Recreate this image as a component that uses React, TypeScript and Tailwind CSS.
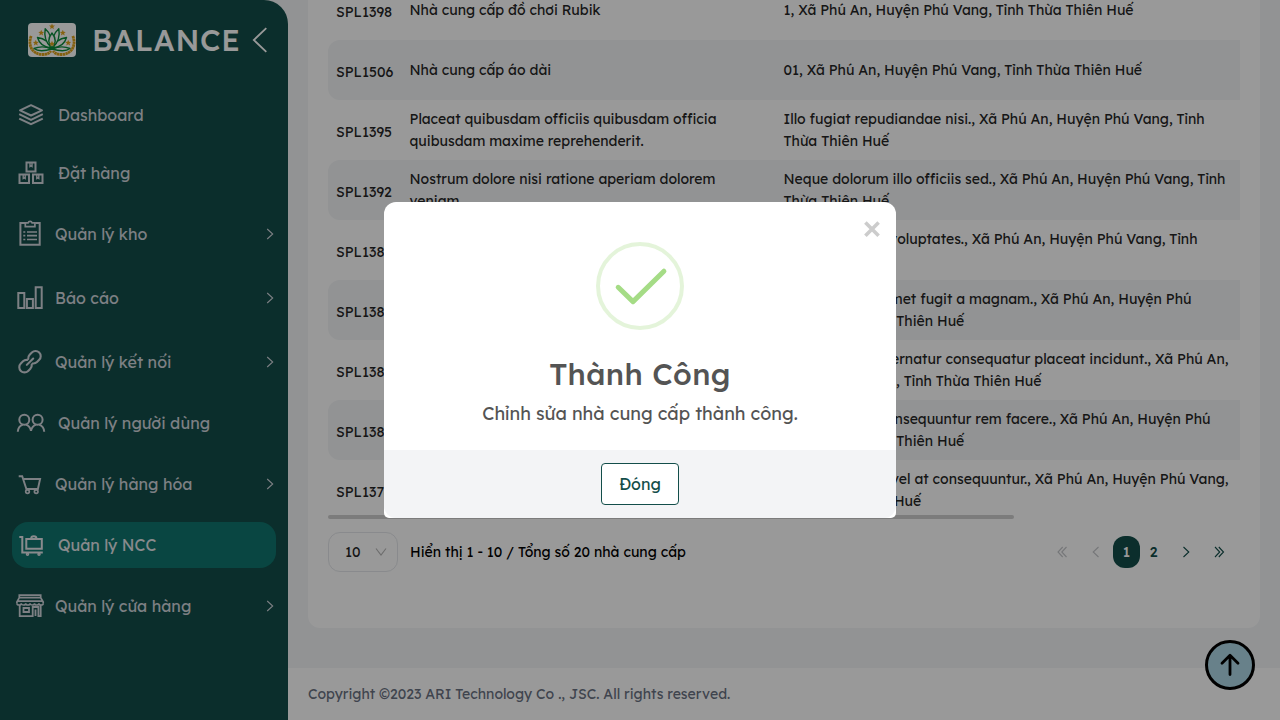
import type { ReactNode } from "react";

type MenuEntry = { label: string; icon: ReactNode; sub?: boolean; active?: boolean };

function MenuIcon({ box, children }: { box: string; children: ReactNode }) {
  return (
    <svg viewBox={box} className="h-[30px] w-[30px] shrink-0" fill="none" stroke="currentColor" strokeWidth="2">
      {children}
    </svg>
  );
}

const menu: MenuEntry[] = [
  {
    label: "Dashboard",
    icon: (
      <MenuIcon box="16 100 30 30">
        <path d="M31 105.2 42 110.3 31 115.500 20 110.300z" strokeLinejoin="round" />
        <path d="M19.2 114.2 31 119.8 42.8 114.2M19.2 118.6 31 124.2 42.8 118.6" />
      </MenuIcon>
    ),
  },
  {
    label: "Đặt hàng",
    icon: (
      <MenuIcon box="16 158 30 30">
        <path d="M26.500 162.500h9v9h-9zM19.500 174.500h9.500v8.500h-9.500zM33 174.500h9.500v8.500H33z" />
        <path d="M30 163v3.500l1-.6 1 .6V163M23.200 175v3.500l1-.6 1 .6V175M36.800 175v3.500l1-.6 1 .6V175" strokeWidth="1.400" />
      </MenuIcon>
    ),
  },
  {
    label: "Quản lý kho",
    sub: true,
    icon: (
      <MenuIcon box="16 219 30 30">
        <path d="M25 223H20.400V244.800H39.700V223H35.200" />
        <path d="M25.300 222.900h2.800c.3-1.200 1-1.600 2-1.600s1.700.4 2 1.600h2.800v3.800h-9.600z" strokeWidth="1.700" />
        <path d="M27 232h10M27 235.700h10M27 239.500h10M23.300 232h2M23.300 235.700h2M23.300 239.500h2" strokeWidth="1.700" />
      </MenuIcon>
    ),
  },
  {
    label: "Báo cáo",
    sub: true,
    icon: (
      <MenuIcon box="16 283 30 30">
        <path d="M18.300 293h6v15h-6zM26.900 299h6v9h-6zM35.700 287.300h6v20.700h-6z" />
      </MenuIcon>
    ),
  },
  {
    label: "Quản lý kết nối",
    sub: true,
    icon: (
      <MenuIcon box="16 347 30 30">
        <g transform="rotate(-45 30 361.700)" strokeWidth="2.100" strokeLinecap="round">
          <path d="M29.300 358.500a5.200 5.200 0 0 0-4-2h-3.100a5.200 5.200 0 0 0 0 10.400h3.100a5.200 5.200 0 0 0 4-2" />
          <path d="M30.700 358.500a5.200 5.200 0 0 1 4-2h3.100a5.200 5.200 0 0 1 0 10.400h-3.100a5.200 5.200 0 0 1-4-2" />
          <path d="M25.500 361.700h9" />
        </g>
      </MenuIcon>
    ),
  },
  {
    label: "Quản lý người dùng",
    icon: (
      <MenuIcon box="16 408 30 30">
        <circle cx="24.300" cy="419.800" r="5" />
        <circle cx="37.600" cy="419.800" r="5" />
        <path d="M17.800 431.800c.2-3.700 2.200-6.200 5-7.200M25.800 424.600c2.700.8 4.600 3 5.200 6.200.6-3.200 2.500-5.400 5.200-6.200M39.200 424.600c2.800 1 4.800 3.500 5 7.200" />
      </MenuIcon>
    ),
  },
  {
    label: "Quản lý hàng hóa",
    sub: true,
    icon: (
      <MenuIcon box="16 469 30 30">
        <path d="M18.700 476.200h3.500l4.200 12.800h11.500L40.100 479H24" strokeWidth="1.900" />
        <circle cx="27.500" cy="491.600" r="1.800" strokeWidth="1.700" />
        <circle cx="36.200" cy="491.600" r="1.800" strokeWidth="1.700" />
      </MenuIcon>
    ),
  },
  {
    label: "Quản lý NCC",
    active: true,
    icon: (
      <MenuIcon box="16 530 30 30">
        <path d="M19.300 537h3v15.500H42.800" />
        <path d="M26.300 539h15.500v9.800H26.300z" />
        <path d="M31.200 538.500c0-1.600 1-2.300 2.600-2.300s2.600.7 2.600 2.300" />
        <circle cx="27.500" cy="554.300" r="1" strokeWidth="1.500" />
        <circle cx="39" cy="554.300" r="1" strokeWidth="1.500" />
      </MenuIcon>
    ),
  },
  {
    label: "Quản lý cửa hàng",
    sub: true,
    icon: (
      <MenuIcon box="16 591 30 30">
        <path d="M19.300 595.200h21.400v2.500H19.300zM19.300 597.700 16.900 602v1.200M40.700 597.700l2.500 4.300v1.200M18 601.200h24.200" strokeWidth="1.700" />
        <path d="M16.900 603.200a2.200 1.900 0 0 0 4.400 0 2.200 1.900 0 0 0 4.400 0 2.200 1.900 0 0 0 4.400 0 2.200 1.900 0 0 0 4.400 0 2.200 1.900 0 0 0 4.400 0 2.200 1.900 0 0 0 4.400 0" strokeWidth="1.500" />
        <path d="M19.700 605v11.200h13V607h5.700v9.200h2.300V605M35.500 616v-6.500M23.500 608h5.500v4h-5.500z" strokeWidth="1.800" />
      </MenuIcon>
    ),
  },
];

type Line = { text: string; className?: string };
type Supplier = { code: string; name: Line[]; address: Line[] };

const suppliers: Supplier[] = [
  {
    code: "SPL1398",
    name: [{ text: "Nhà cung cấp đồ chơi Rubik" }],
    address: [{ text: "1, Xã Phú An, Huyện Phú Vang, Tỉnh Thừa Thiên Huế" }],
  },
  {
    code: "SPL1506",
    name: [{ text: "Nhà cung cấp áo dài" }],
    address: [{ text: "01, Xã Phú An, Huyện Phú Vang, Tỉnh Thừa Thiên Huế" }],
  },
  {
    code: "SPL1395",
    name: [{ text: "Placeat quibusdam officiis quibusdam officia" }, { text: "quibusdam maxime reprehenderit." }],
    address: [{ text: "Illo fugiat repudiandae nisi., Xã Phú An, Huyện Phú Vang, Tỉnh" }, { text: "Thừa Thiên Huế" }],
  },
  {
    code: "SPL1392",
    name: [{ text: "Nostrum dolore nisi ratione aperiam dolorem" }, { text: "veniam." }],
    address: [{ text: "Neque dolorum illo officiis sed., Xã Phú An, Huyện Phú Vang, Tỉnh" }, { text: "Thừa Thiên Huế" }],
  },
  {
    code: "SPL1389",
    name: [{ text: "Nisi dolorem ratione." }],
    address: [
      { text: "Maxime nisi voluptates., Xã Phú An, Huyện Phú Vang, Tỉnh", className: "w-[414px] justify-end" },
      { text: "Thừa Thiên" },
    ],
  },
  {
    code: "SPL1388",
    name: [{ text: "Officia quibusdam." }],
    address: [
      { text: "Aperiam sit amet fugit a magnam., Xã Phú An, Huyện Phú", className: "w-[408px] justify-end" },
      { text: "Vang, Tỉnh Thừa Thiên Huế" },
    ],
  },
  {
    code: "SPL1386",
    name: [{ text: "Maxime officiis." }],
    address: [
      { text: "Nisi aspernatur consequatur placeat incidunt., Xã Phú An,", className: "w-[445px] justify-end" },
      { text: "Huyện Phú Vang, Tỉnh Thừa Thiên Huế" },
    ],
  },
  {
    code: "SPL1384",
    name: [{ text: "Dolorem aperiam." }],
    address: [
      { text: "Sit illo nisi consequuntur rem facere., Xã Phú An, Huyện Phú", className: "w-[427px] justify-end" },
      { text: "Vang, Tỉnh Thừa Thiên Huế" },
    ],
  },
  {
    code: "SPL1376",
    name: [{ text: "Ratione placeat." }],
    address: [
      { text: "Nostrum illo vel at consequuntur., Xã Phú An, Huyện Phú Vang,", className: "w-[445px] justify-end" },
      { text: "Tỉnh Thừa Thiên Huế" },
    ],
  },
];

const stars = [
  [24, 3.4],
  [13.2, 9.8],
  [34.8, 9.8],
  [7.8, 19.8],
  [40.2, 19.8],
  [24, 20.8],
];

function Logo() {
  return (
    <svg viewBox="0 0 48 34" className="h-[34px] w-12 rounded bg-white">
      <g fill="none" stroke="#dda018" strokeWidth="2.800" strokeDasharray="2.400 .4">
        <path d="M3.200 13C-.5 22 4 31 14 31.500c4.500.2 7-1 9-3.500" />
        <path d="M44.800 13c3.700 9-.8 18-10.800 18.500-4.500.2-7-1-9-3.500" />
      </g>
      <g fill="#fff" stroke="#0d8a3c" strokeWidth="1.400" strokeLinejoin="round">
        <path d="M24 26C14 29 9 28 6 25.500c6-2.500 12-2 18 .5zM24 26c10 3 15 2 18-.5-6-2.500-12-2-18 .5z" />
        <path d="M23 25C15 24 11 20 9.500 14.500 16 15.500 21 18.500 23 25zM25 25c8-1 12-5 13.500-10.500C32 15.500 27 18.500 25 25z" />
        <path d="M23 24C17.500 19 16 12.500 17.200 5.800 22 10 24.500 16 23 24zM25 24c5.500-5 7-11.500 5.800-18.200C26 10 23.500 16 25 24z" />
        <path d="M24 25c-4-4.500-4-10 0-15 4 5 4 10.500 0 15z" />
      </g>
      {stars.map(([x, y]) => (
        <path
          key={`${x}-${y}`}
          transform={`translate(${x} ${y})`}
          fill="#dfa31b"
          d="M0-3 .8-1 3-.9 1.300.5 1.900 2.700 0 1.500-1.900 2.700-1.300.5-3-.9-.8-1z"
        />
      ))}
    </svg>
  );
}

function Sidebar() {
  return (
    <aside className="flex h-[720px] w-72 shrink-0 flex-col rounded-tr-3xl bg-[#134e4a]">
      <div className="flex h-20 items-center pl-7 text-white">
        <Logo />
        <span className="ml-4 w-[150px] text-[30px] leading-9 font-medium tracking-[0.7px]">BALANCE</span>
        <svg viewBox="0 0 16 26" className="ml-2.5 h-[26px] w-4" fill="none" stroke="currentColor" strokeWidth="1.800">
          <path d="M14.300 1.200 1.800 13l12.500 11.800" />
        </svg>
      </div>
      <ul className="mt-3 flex flex-col gap-3 px-3">
        {menu.map((item) => (
          <li
            key={item.label}
            className={`flex items-center rounded-2xl pl-1 text-base ${item.sub ? "h-[52px]" : "h-[46px]"} ${
              item.active ? "bg-[#0f766e] text-gray-200" : "text-gray-300"
            }`}
          >
            {item.icon}
            <span className={`whitespace-nowrap ${item.sub ? "ml-[9px]" : "ml-3"}`}>{item.label}</span>
            {item.sub && (
              <svg viewBox="0 0 8 12" className="mr-0.5 ml-auto h-3 w-2" fill="none" stroke="currentColor" strokeWidth="1.100">
                <path d="M1.200 1 6.700 6l-5.500 5" />
              </svg>
            )}
          </li>
        ))}
      </ul>
    </aside>
  );
}

function Cell({ lines, className }: { lines: Line[]; className: string }) {
  return (
    <div className={`flex flex-col whitespace-nowrap ${className}`}>
      {lines.map((line) => (
        <span key={line.text} className={`flex leading-[22px] ${line.className ?? ""}`}>
          {line.text}
        </span>
      ))}
    </div>
  );
}

function SupplierTable() {
  return (
    <div className="-mt-5 text-sm text-[#262626]">
      {suppliers.map((s, i) => (
        <div key={s.code} className={`flex h-[60px] items-center rounded-l-xl ${i % 2 ? "bg-[#f3f5f7]" : "bg-white"}`}>
          <span className="w-[81.5px] shrink-0 pt-1 pl-2">{s.code}</span>
          <Cell lines={s.name} className="w-[374px] shrink-0" />
          <Cell lines={s.address} className="w-[456px]" />
        </div>
      ))}
    </div>
  );
}

function PageArrow({ d, className }: { d: string; className: string }) {
  return (
    <svg viewBox="0 0 12 12" className={`h-3 w-3 ${className}`} fill="none" stroke="currentColor" strokeWidth="1.100">
      <path d={d} />
    </svg>
  );
}

function Pagination() {
  return (
    <div className="mt-3 flex h-10 items-center text-sm">
      <div className="flex h-10 w-[70px] items-center justify-between rounded-xl border border-gray-200 pr-2.5 pl-4 text-[#262626]">
        <span>10</span>
        <svg viewBox="0 0 12 12" className="h-3 w-3 text-[#b5b5b5]" fill="none" stroke="currentColor" strokeWidth="1.100">
          <path d="M1 2.500 6 9l5-6.500" />
        </svg>
      </div>
      <span className="ml-3 whitespace-nowrap text-black">Hiển thị 1 - 10 / Tổng số 20 nhà cung cấp</span>
      <div className="mr-[15px] ml-auto flex items-center text-[#134e4a]">
        <PageArrow className="text-[#c4c6ca]" d="M5.700 1 1 6l4.700 5M9.500 1 4.800 6 9.500 11" />
        <PageArrow className="ml-[21px] text-[#c4c6ca]" d="M8.500 1 3.200 6l5.300 5" />
        <span className="ml-[11px] flex h-8 w-[27px] items-center justify-center rounded-xl bg-[#134e4a] font-medium text-white">1</span>
        <span className="w-[27px] text-center font-medium">2</span>
        <PageArrow className="ml-[13px]" d="M3.500 1 8.800 6l-5.300 5" />
        <PageArrow className="ml-[21px]" d="M2 1l4.700 5L2 11M5.800 1l4.700 5-4.700 5" />
      </div>
    </div>
  );
}

function SuccessDialog() {
  return (
    <div className="relative flex h-[316px] w-[512px] flex-col items-center overflow-hidden rounded-t-xl rounded-b-[5px] bg-white text-[#545454]">
      <button className="absolute top-[17px] right-[14px] flex h-5 w-5 items-center justify-center">
        <svg viewBox="0 0 20 20" className="h-5 w-5" stroke="#ccc" strokeWidth="3.600">
          <path d="M3.400 3.600 16.600 16.800M16.600 3.600 3.400 16.800" />
        </svg>
      </button>
      <svg viewBox="0 0 88 88" className="mt-10 h-[88px] w-[88px] shrink-0" fill="none">
        <circle cx="44" cy="44" r="42" stroke="#a5dc86" strokeOpacity=".3" strokeWidth="4" />
        <path d="M22.200 45.300 37 59.600 67.900 29.200" stroke="#a5dc86" strokeWidth="5" strokeLinecap="round" strokeLinejoin="round" />
      </svg>
      <h2 className="mt-[26px] text-[30px] leading-9 font-medium tracking-[0.35px]">Thành Công</h2>
      <p className="mt-2 text-lg leading-7">Chỉnh sửa nhà cung cấp thành công.</p>
      <div className="mt-auto flex h-[68px] w-full items-center justify-center rounded-b-xl bg-gray-100">
        <button className="h-[42px] w-[78px] rounded border border-[#134e4a] bg-white text-base text-[#134e4a]">Đóng</button>
      </div>
    </div>
  );
}

export default function App() {
  return (
    <div className="relative h-[720px] w-[1280px] overflow-hidden bg-[#f3f5f7] font-['Lexend','Inter',sans-serif] [font-feature-settings:'cv11']">
      <div className="flex h-full">
        <Sidebar />
        <main className="flex min-w-0 flex-1 flex-col">
          <section className="mx-5 h-[628px] rounded-b-xl bg-white px-5">
            <div className="relative h-[520px] overflow-hidden">
              <SupplierTable />
              <div className="absolute top-[515px] left-0 h-1 w-[686px] rounded-full bg-[#cfcfcf]" />
            </div>
            <Pagination />
          </section>
          <footer className="mt-10 flex h-[52px] items-center bg-white pl-5 text-sm text-gray-500">
            Copyright ©2023 ARI Technology Co ., JSC. All rights reserved.
          </footer>
        </main>
      </div>
      <button className="absolute top-[640px] left-[1205px] flex h-[50px] w-[50px] items-center justify-center rounded-full border-[3px] border-black bg-[#add8e6]">
        <svg viewBox="0 0 24 24" className="h-6 w-6" fill="none" stroke="#000" strokeWidth="2.800" strokeLinecap="round" strokeLinejoin="round">
          <path d="M12 21.500V2.500M4 10.300l8-8 8 8" />
        </svg>
      </button>
      <div className="absolute inset-0 flex items-center justify-center bg-black/40">
        <SuccessDialog />
      </div>
    </div>
  );
}
